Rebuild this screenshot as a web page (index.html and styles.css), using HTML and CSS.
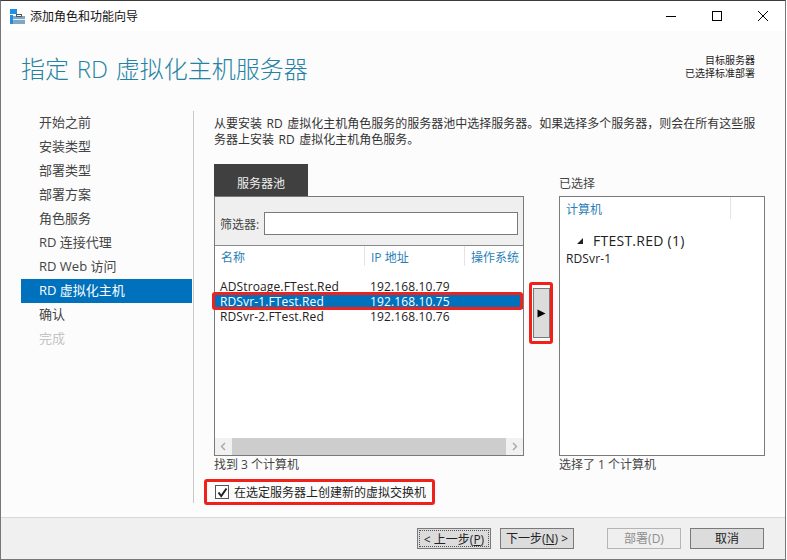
FILE: index.html
```html
<!DOCTYPE html>
<html lang="zh-CN">
<head>
<meta charset="utf-8">
<title>添加角色和功能向导</title>
<link rel="stylesheet" href="styles.css">
</head>
<body>
<div class="window">
  <div class="titlebar">
    <svg class="app-icon" width="15" height="15" viewBox="0 0 15 15">
      <rect x="0" y="0" width="7" height="5" fill="#1f8fe6"/>
      <rect x="0" y="6" width="3" height="9" fill="#1f8fe6"/>
      <rect x="3" y="7" width="12" height="8" fill="#7fa8c4"/>
      <rect x="3" y="10" width="12" height="1" fill="#e6eef4"/>
      <rect x="6.5" y="5.5" width="5" height="2" fill="none" stroke="#556" stroke-width="1"/>
    </svg>
    <span class="title-text">添加角色和功能向导</span>
    <div class="controls">
      <svg width="12" height="12" viewBox="0 0 12 12"><path d="M1 6.5H11" stroke="#000"/></svg>
      <svg width="12" height="12" viewBox="0 0 12 12"><rect x="1.5" y="1.5" width="9" height="9" fill="none" stroke="#000"/></svg>
      <svg width="12" height="12" viewBox="0 0 12 12"><path d="M1 1L11 11M11 1L1 11" stroke="#000"/></svg>
    </div>
  </div>
  <div class="header">
    <h1 class="page-title">指定 RD 虚拟化主机服务器</h1>
    <div class="target"><div>目标服务器</div><div>已选择标准部署</div></div>
  </div>
  <div class="body">
    <nav class="nav">
      <div class="nav-item">开始之前</div>
      <div class="nav-item">安装类型</div>
      <div class="nav-item">部署类型</div>
      <div class="nav-item">部署方案</div>
      <div class="nav-item">角色服务</div>
      <div class="nav-item">RD 连接代理</div>
      <div class="nav-item">RD Web 访问</div>
      <div class="nav-item active">RD 虚拟化主机</div>
      <div class="nav-item">确认</div>
      <div class="nav-item disabled">完成</div>
    </nav>
    <main class="content">
      <p class="intro">从要安装 RD 虚拟化主机角色服务的服务器池中选择服务器。如果选择多个服务器，则会在所有这些服务器上安装 RD 虚拟化主机角色服务。</p>
      <div class="columns">
        <section class="pool">
          <div class="tab">服务器池</div>
          <div class="panel pool-panel">
            <div class="filter"><span>筛选器:</span><div class="filter-input"></div></div>
            <div class="list-head">
              <div class="col col-name">名称</div>
              <div class="col col-ip">IP 地址</div>
              <div class="col col-os">操作系统</div>
            </div>
            <div class="rows">
              <div class="row"><span class="cell-name">ADStroage.FTest.Red</span><span>192.168.10.79</span></div>
              <div class="row selected"><span class="cell-name">RDSvr-1.FTest.Red</span><span>192.168.10.75</span><i class="mark mark-row"></i></div>
              <div class="row"><span class="cell-name">RDSvr-2.FTest.Red</span><span>192.168.10.76</span></div>
            </div>
            <div class="hscroll">
              <svg width="17" height="17" viewBox="0 0 17 17"><path d="M10 5L6.5 8.5L10 12" fill="none" stroke="#a6a6a6" stroke-width="1.4"/></svg>
              <div class="thumb"></div>
              <svg width="17" height="17" viewBox="0 0 17 17"><path d="M7 5L10.5 8.5L7 12" fill="none" stroke="#a6a6a6" stroke-width="1.4"/></svg>
            </div>
          </div>
          <div class="count">找到 3 个计算机</div>
        </section>
        <div class="move-col">
          <div class="move-btn"><svg width="9" height="9" viewBox="0 0 9 9"><path d="M0.5 0.5L8.5 4.5L0.5 8.5Z" fill="#000"/></svg><i class="mark mark-move"></i></div>
        </div>
        <section class="selected-col">
          <div class="selected-label">已选择</div>
          <div class="panel selected-panel">
            <div class="sel-head"><div class="sel-col">计算机</div></div>
            <div class="group"><svg width="8" height="8" viewBox="0 0 8 8"><path d="M7 1V7H1Z" fill="#222"/></svg><span>FTEST.RED (1)</span></div>
            <div class="sel-item">RDSvr-1</div>
          </div>
          <div class="count">选择了 1 个计算机</div>
        </section>
      </div>
      <label class="check-row">
        <span class="checkbox"><svg width="13" height="13" viewBox="0 0 13 13"><path d="M2.5 6.5L5.2 10L10.5 2.5" fill="none" stroke="#222" stroke-width="2"/></svg></span>
        <span>在选定服务器上创建新的虚拟交换机</span>
        <i class="mark mark-check"></i>
      </label>
    </main>
  </div>
  <div class="footer">
    <div class="btn focused"><span>&lt; 上一步(<u>P</u>)</span></div>
    <div class="btn"><span>下一步(<u>N</u>) &gt;</span></div>
    <div class="btn off gap-left">部署(D)</div>
    <div class="btn">取消</div>
  </div>
</div>
</body>
</html>
```
FILE: styles.css
```css
* { box-sizing: border-box; }
html, body { margin: 0; padding: 0; }
body {
  width: 787px; height: 560px; overflow: hidden; background: #fff;
  font-family: "Open Sans", "Noto Sans CJK SC", sans-serif;
  font-size: 12px; color: #333;
}
.window {
  width: 786px; height: 560px; display: flex; flex-direction: column;
  border-top: 1px solid #3c3c3c; border-left: 1px solid #777; border-right: 1px solid #777; border-bottom: 1px solid #777;
  background: #fcfcfc;
}
.titlebar { height: 30px; flex: none; background: #fff; display: flex; align-items: center; padding-left: 9px; color: #111; }
.app-icon { flex: none; margin-right: 5px; }
.title-text { font-size: 12px; }
.controls { margin-left: auto; display: flex; gap: 34px; padding-right: 16px; }
.controls svg { display: block; }
.header { height: 78px; flex: none; display: flex; justify-content: space-between; padding: 0 30px 0 20px; }
.page-title { margin: 19px 0 0; font-weight: 300; font-size: 24px; line-height: 38px; color: #2482a5; word-spacing: 1.5px; }
.target { margin-top: 23px; text-align: right; font-size: 10px; line-height: 13px; color: #222; }
.body { flex: 1; display: flex; min-height: 0; }
.nav { width: 193px; flex: none; padding: 2px 0 0 20px; position: relative; }
.nav::after { content: ""; position: absolute; right: 0; top: 2px; height: 392px; width: 1px; background: #c8c8c8; }
.nav-item { height: 24px; line-height: 23px; padding-left: 18px; width: 171px; font-size: 13px; color: #444; }
.nav-item.active { background: #0071bc; color: #fff; }
.nav-item.disabled { color: #c4c4c4; }
.content { flex: 1; padding: 7px 20px 0 20px; min-width: 0; }
.intro { margin: 0; font-size: 12px; line-height: 16px; color: #333; width: 545px; word-spacing: 1.5px; }
.columns { display: flex; margin-top: 16px; height: 313px; }
.pool { width: 310px; flex: none; }
.tab { width: 94px; height: 32px; background: #404040; color: #eee; text-align: center; line-height: 40px; font-size: 12px; }
.panel { border: 1px solid #7a7a7a; background: #fff; height: 260px; }
.pool-panel { display: flex; flex-direction: column; }
.filter { height: 49px; flex: none; background: #efefef; border-bottom: 1px solid #8a8a8a; display: flex; align-items: center; padding: 5px 4px 0 5px; gap: 5px; color: #444; }
.filter-input { width: 254px; height: 23px; background: #fff; border: 1px solid #7a7a7a; }
.list-head { display: flex; height: 20px; flex: none; color: #2a7fb8; line-height: 24px; }
.col { border-right: 1px solid #e4e4e4; padding-left: 6px; white-space: nowrap; overflow: hidden; }
.col-name { width: 150px; }
.col-ip { width: 100px; }
.col-os { flex: 1; border-right: 0; }
.rows { flex: 1; padding-top: 13px; min-height: 0; }
.row { display: flex; height: 15px; line-height: 15px; padding-left: 5px; color: #222; position: relative; letter-spacing: 0.13px; }
.cell-name { width: 150px; flex: none; }
.row.selected { background: #0071bc; color: #fff; }
.hscroll { height: 17px; flex: none; display: flex; background: #f1f1f1; }
.hscroll svg { display: block; }
.thumb { flex: 1; background: #cdcdcd; }
.count { margin-top: 1px; line-height: 16px; color: #444; }
.move-col { width: 35px; flex: none; padding: 124px 0 0 9px; }
.move-btn { width: 17px; height: 50px; background: #dcdcdc; border: 1px solid #7a7a7a; display: flex; align-items: center; justify-content: center; position: relative; }
.selected-col { width: 206px; flex: none; }
.selected-label { height: 32px; line-height: 39px; color: #444; }
.selected-panel { height: 260px; }
.sel-head { height: 22px; color: #2a7fb8; line-height: 26px; }
.sel-col { width: 171px; height: 22px; padding-left: 6px; border-right: 1px solid #e4e4e4; }
.group { display: flex; align-items: center; padding: 13px 0 0 16px; gap: 9px; font-size: 14px; line-height: 18px; color: #222; letter-spacing: 0.25px; }
.sel-item { padding-left: 6px; line-height: 18px; color: #222; letter-spacing: 0.13px; }
.check-row { display: flex; align-items: center; gap: 5px; margin: 2px 0 0 -10px; height: 26px; width: 231px; position: relative; color: #222; padding-left: 11px; }
.checkbox { width: 14px; height: 14px; border: 1px solid #555; background: #fff; flex: none; display: flex; }
.checkbox svg { display: block; flex: none; margin: -0.5px; }
.mark { position: absolute; border: 3px solid #f0211a; border-radius: 3px; display: block; pointer-events: none; }
.mark-row { left: -3px; top: -2px; width: 311px; height: 18px; }
.mark-move { left: -5px; top: -7px; width: 24px; height: 62px; }
.mark-check { left: 0; top: 0; width: 231px; height: 26px; }
.footer { height: 42px; flex: none; background: #f0f0f0; border-top: 1px solid #d9d9d9; display: flex; align-items: flex-start; padding: 10px 21px 0 416px; gap: 9px; }
.btn { width: 74px; height: 21px; background: #dcdcdc; border: 1px solid #7a7a7a; text-align: center; line-height: 19px; color: #222; }
.btn.focused { padding: 1px; line-height: 17px; }
.btn.focused span { display: block; height: 17px; border: 1px dotted #555; }
.btn.off { color: #8e8e8e; background: #efefef; border-color: #b5b5b5; }
.gap-left { margin-left: 24px; }
```
